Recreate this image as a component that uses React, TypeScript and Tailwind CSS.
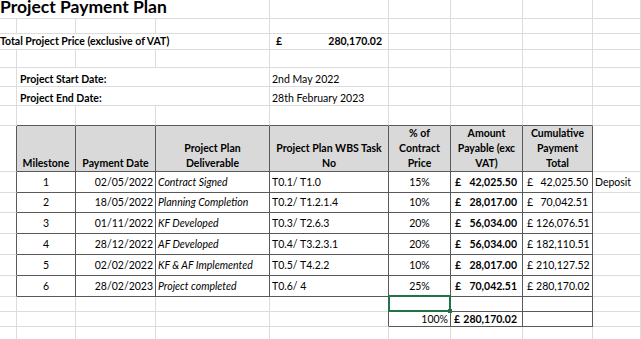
import React from 'react';

type CellDef = {
  span?: number;
  cls?: string;
  content?: React.ReactNode;
  selected?: boolean;
};

const isTable = (r: number, c: number) =>
  (r >= 7 && r <= 13 && c >= 1 && c <= 7) || (r >= 14 && r <= 15 && c >= 5 && c <= 7);

const empty = (n: number): CellDef[] => Array.from({ length: n }, () => ({}));

const H = 'bg-[#d9d9d9] items-end justify-center text-center font-bold leading-[15px]';
const D = 'items-center leading-[15px] whitespace-nowrap';

const data = [
  { m: '1', d: '02/05/2022', del: 'Contract Signed', wbs: 'T0.1/ T1.0', pct: '15%', amt: '42,025.50', cum: '42,025.50', note: 'Deposit' },
  { m: '2', d: '18/05/2022', del: 'Planning Completion', wbs: 'T0.2/ T1.2.1.4', pct: '10%', amt: '28,017.00', cum: '70,042.51', note: '' },
  { m: '3', d: '01/11/2022', del: 'KF Developed', wbs: 'T0.3/ T2.6.3', pct: '20%', amt: '56,034.00', cum: '126,076.51', note: '' },
  { m: '4', d: '28/12/2022', del: 'AF Developed', wbs: 'T0.4/ T3.2.3.1', pct: '20%', amt: '56,034.00', cum: '182,110.51', note: '' },
  { m: '5', d: '02/02/2022', del: 'KF & AF Implemented', wbs: 'T0.5/ T4.2.2', pct: '10%', amt: '28,017.00', cum: '210,127.52', note: '' },
  { m: '6', d: '28/02/2023', del: 'Project completed', wbs: 'T0.6/ 4', pct: '25%', amt: '70,042.51', cum: '280,170.02', note: '' },
];

const rows: CellDef[][] = [
  [
    { span: 4, cls: 'items-end pb-[3px] text-[17.5px] leading-[16px] font-bold whitespace-nowrap', content: 'Project Payment Plan' },
    ...empty(5),
  ],
  empty(9),
  [
    { span: 4, cls: 'items-end font-bold whitespace-nowrap leading-[15px]', content: 'Total Project Price (exclusive of VAT)' },
    {
      cls: 'items-end justify-between font-bold pl-[6px] pr-[6px] leading-[15px] whitespace-nowrap',
      content: (
        <>
          <span>£</span>
          <span>280,170.02</span>
        </>
      ),
    },
    ...empty(4),
  ],
  empty(9),
  [
    {},
    { span: 3, cls: 'items-end font-bold pl-[3px] leading-[13px] whitespace-nowrap', content: 'Project Start Date:' },
    { cls: 'items-end pl-[2px] leading-[13px] whitespace-nowrap', content: '2nd May 2022' },
    ...empty(4),
  ],
  [
    {},
    { span: 3, cls: 'items-end font-bold pl-[3px] leading-[13px] whitespace-nowrap', content: 'Project End Date:' },
    { cls: 'items-end pl-[2px] leading-[13px] whitespace-nowrap', content: '28th February 2023' },
    ...empty(4),
  ],
  empty(9),
  [
    {},
    { cls: H, content: 'Milestone' },
    { cls: H, content: 'Payment Date' },
    { cls: H, content: (<span>Project Plan<br />Deliverable</span>) },
    { cls: H, content: (<span className="whitespace-nowrap">Project Plan WBS Task<br />No</span>) },
    { cls: H, content: (<span>% of<br />Contract<br />Price</span>) },
    { cls: H, content: (<span className="whitespace-nowrap">Amount<br />Payable (exc<br />VAT)</span>) },
    { cls: H, content: (<span>Cumulative<br />Payment<br />Total</span>) },
    {},
  ],
  ...data.map((row): CellDef[] => [
    {},
    { cls: D + ' justify-center', content: row.m },
    { cls: D + ' justify-end pr-[2px]', content: row.d },
    { cls: D + ' italic pl-[2px]', content: row.del },
    { cls: D + ' pl-[2px]', content: row.wbs },
    { cls: D + ' justify-center', content: row.pct },
    {
      cls: D + ' justify-between font-bold pl-[4px] pr-[5px]',
      content: (
        <>
          <span>£</span>
          <span>{row.amt}</span>
        </>
      ),
    },
    {
      cls: D + ' justify-between gap-[3px] pl-[4px] pr-[4px]',
      content: (
        <>
          <span>£</span>
          <span>{row.cum}</span>
        </>
      ),
    },
    { cls: D + ' pl-[2px]', content: row.note },
  ]),
  [...empty(5), { selected: true }, ...empty(3)],
  [
    ...empty(5),
    { cls: 'items-end justify-end pr-[2px] leading-[14px] whitespace-nowrap', content: '100%' },
    {
      cls: 'items-end justify-between font-bold pl-[3px] pr-[5px] leading-[14px] whitespace-nowrap',
      content: (
        <>
          <span>£</span>
          <span>280,170.02</span>
        </>
      ),
    },
    ...empty(2),
  ],
  empty(9),
];

export default function App() {
  const cells: React.ReactNode[] = [];
  rows.forEach((row, r) => {
    let c = 0;
    row.forEach((cell, i) => {
      const span = cell.span ?? 1;
      const last = c + span - 1;
      const rd = isTable(r, last) || isTable(r, last + 1);
      const bd = isTable(r, c) || isTable(r + 1, c);
      const spanCls = span === 4 ? 'col-span-4' : span === 3 ? 'col-span-3' : '';
      cells.push(
        <div
          key={`${r}-${i}`}
          className={[
            'relative flex min-w-0 border-r border-b',
            rd ? 'border-r-[#595959]' : 'border-r-[#dcdcdc]',
            bd ? 'border-b-[#595959]' : 'border-b-[#dcdcdc]',
            spanCls,
            cell.cls ?? '',
          ].join(' ')}
        >
          {cell.content}
          {cell.selected && (
            <div className="absolute -left-[1px] -top-[2px] -right-[1px] -bottom-[1px] border-2 border-[#217346]">
              <div className="absolute -right-[3px] -bottom-[3px] w-[4px] h-[4px] bg-[#217346]" />
            </div>
          )}
        </div>
      );
      c += span;
    });
  });

  return (
    <div className="w-[641px] h-[339px] overflow-hidden bg-white text-black text-[10.5px] font-['Lato',sans-serif]">
      <div className="grid grid-cols-[17px_59px_80px_114px_119px_62px_72px_70px_1fr] grid-rows-[19px_15px_16px_18px_19px_19px_20px_46px_21px_20px_21px_21px_21px_21px_15px_15px_14px]">
        {cells}
      </div>
    </div>
  );
}
